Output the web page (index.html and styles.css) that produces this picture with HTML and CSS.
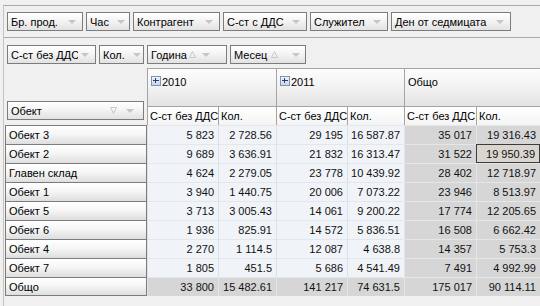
FILE: index.html
```html
<!DOCTYPE html>
<html lang="bg">
<head>
<meta charset="utf-8">
<title>Pivot</title>
<link rel="stylesheet" href="styles.css">
</head>
<body>
<div class="frame">
  <div class="filter-area">
    <div class="fbtn fw-br"><span>Бр. прод.</span><i class="arr"></i></div>
    <div class="fbtn fw-hour"><span>Час</span><i class="arr"></i></div>
    <div class="fbtn fw-ctr"><span>Контрагент</span><i class="arr"></i></div>
    <div class="fbtn fw-vat"><span>С-ст с ДДС</span><i class="arr"></i></div>
    <div class="fbtn fw-emp"><span>Служител</span><i class="arr"></i></div>
    <div class="fbtn fw-day"><span>Ден от седмицата</span><i class="arr"></i></div>
  </div>
  <div class="pivot">
    <div class="data-area">
      <div class="fbtn fw-ssb"><span class="clip">С-ст без ДДС</span><i class="arr"></i></div>
      <div class="fbtn fw-qty"><span>Кол.</span><i class="arr"></i></div>
    </div>
    <div class="col-area">
      <div class="fbtn fw-year"><span>Година</span><svg class="sort" width="7" height="7" viewBox="0 0 7 7"><path d="M3.5 0.5 L6.5 6.5 L0.5 6.5 Z" fill="none" stroke="#c8c8c8" stroke-width="1"/></svg><i class="arr"></i></div>
      <div class="fbtn fw-month"><span>Месец</span><svg class="sort" width="7" height="7" viewBox="0 0 7 7"><path d="M3.5 0.5 L6.5 6.5 L0.5 6.5 Z" fill="none" stroke="#c8c8c8" stroke-width="1"/></svg><i class="arr"></i></div>
    </div>
    <div class="row-area">
      <div class="fbtn fw-obj"><span>Обект</span><svg class="sort" width="7" height="7" viewBox="0 0 7 7"><path d="M0.5 0.5 L6.5 0.5 L3.5 6.5 Z" fill="none" stroke="#c8c8c8" stroke-width="1"/></svg><i class="arr"></i></div>
    </div>
    <div class="chead span2"><i class="plus"></i>2010</div>
    <div class="chead span2"><i class="plus"></i>2011</div>
    <div class="chead span2 last">Общо</div>

    <div class="dhead">С-ст без ДДС</div><div class="dhead">Кол.</div>
    <div class="dhead">С-ст без ДДС</div><div class="dhead">Кол.</div>
    <div class="dhead">С-ст без ДДС</div><div class="dhead last">Кол.</div>

    <div class="rhead">Обект 3</div><div class="c">5 823</div><div class="c">2 728.56</div><div class="c">29 195</div><div class="c">16 587.87</div><div class="c t">35 017</div><div class="c t">19 316.43</div>
    <div class="rhead">Обект 2</div><div class="c">9 689</div><div class="c">3 636.91</div><div class="c">21 832</div><div class="c">16 313.47</div><div class="c t">31 522</div><div class="c t sel">19 950.39</div>
    <div class="rhead">Главен склад</div><div class="c">4 624</div><div class="c">2 279.05</div><div class="c">23 778</div><div class="c">10 439.92</div><div class="c t">28 402</div><div class="c t">12 718.97</div>
    <div class="rhead">Обект 1</div><div class="c">3 940</div><div class="c">1 440.75</div><div class="c">20 006</div><div class="c">7 073.22</div><div class="c t">23 946</div><div class="c t">8 513.97</div>
    <div class="rhead">Обект 5</div><div class="c">3 713</div><div class="c">3 005.43</div><div class="c">14 061</div><div class="c">9 200.22</div><div class="c t">17 774</div><div class="c t">12 205.65</div>
    <div class="rhead">Обект 6</div><div class="c">1 936</div><div class="c">825.91</div><div class="c">14 572</div><div class="c">5 836.51</div><div class="c t">16 508</div><div class="c t">6 662.42</div>
    <div class="rhead">Обект 4</div><div class="c">2 270</div><div class="c">1 114.5</div><div class="c">12 087</div><div class="c">4 638.8</div><div class="c t">14 357</div><div class="c t">5 753.3</div>
    <div class="rhead">Обект 7</div><div class="c">1 805</div><div class="c">451.5</div><div class="c">5 686</div><div class="c">4 541.49</div><div class="c t">7 491</div><div class="c t">4 992.99</div>
    <div class="rhead">Общо</div><div class="c t">33 800</div><div class="c t">15 482.61</div><div class="c t">141 217</div><div class="c t">74 631.5</div><div class="c t">175 017</div><div class="c t">90 114.11</div>
  </div>
</div>
</body>
</html>
```
FILE: styles.css
```css
* { box-sizing: border-box; }
html, body { margin: 0; padding: 0; }
body {
  width: 540px;
  height: 306px;
  overflow: hidden;
  background: #f0f0f0;
  font-family: "Liberation Sans", Arial, sans-serif;
  font-size: 11px;
  color: #000;
}
.frame {
  margin: 5px 0 0 3px;
  border-top: 1px solid #a8a8a8;
  border-left: 1px solid #c4c4c4;
  height: 301px;
}
.filter-area {
  display: flex;
  gap: 3px;
  padding: 6px 0 6px 3px;
  border-bottom: 1px solid #a8a8a8;
}
.fbtn {
  height: 19px;
  display: flex;
  align-items: center;
  padding: 0 6px 0 3px;
  border: 1px solid #7c7c7c;
  background: linear-gradient(#ffffff, #f6f6f6 40%, #e2e2e2);
  white-space: nowrap;
  flex: none;
}
.fbtn span { flex: 1; }
.arr {
  width: 0; height: 0;
  margin-left: 8px;
  border-left: 4px solid transparent;
  border-right: 4px solid transparent;
  border-top: 4px solid #c6c6c6;
}
.sort { flex: none; }
.sort + .arr { margin-left: 6px; }
.clip { overflow: hidden; }
.fw-br { width: 76px; }
.fw-hour { width: 44px; }
.fw-ctr { width: 87px; }
.fw-vat { width: 84px; }
.fw-emp { width: 78px; }
.fw-day { width: 120px; }
.fw-ssb { width: 89px; }
.fw-ssb .arr { margin-left: 3px; }
.fw-qty { width: 45px; }
.fw-year { width: 80px; padding-right: 19px; }
.fw-year span { flex: none; width: 38px; }
.fw-month { width: 76px; padding-right: 8px; }
.fw-month span { flex: none; width: 37px; }
.fw-month .sort + .arr { margin-left: 14px; }
.fw-obj { width: 137px; padding-right: 9px; }
.fw-obj .sort + .arr { margin-left: 9px; }

.pivot {
  display: grid;
  margin-left: 1px;
  grid-template-columns: 142px 71px 58px 71px 57px 72px 1fr;
  grid-template-rows: 30px 38px 19px repeat(9, 19px);
}
.data-area {
  grid-column: 1;
  grid-row: 1;
  display: flex;
  gap: 3px;
  padding: 7px 0 0 2px;
}
.col-area {
  grid-column: 2 / 8;
  grid-row: 1;
  display: flex;
  gap: 3px;
  padding: 7px 0 0 0;
}
.row-area {
  grid-column: 1;
  grid-row: 2 / 4;
  display: flex;
  align-items: flex-end;
  padding: 0 0 5px 2px;
}
.chead {
  border: 1px solid #a4a4a4;
  border-right: none;
  border-bottom: none;
  background: linear-gradient(#fdfdfd, #f2f2f2 50%, #e3e3e3);
  padding: 7px 0 0 3px;
  display: flex;
  align-items: flex-start;
  line-height: 12px;
}
.span2 { grid-column: span 2; }
.plus {
  width: 10px; height: 10px;
  margin: 0 1px 0 0;
  border: 1px solid #7d93ba;
  background: linear-gradient(#eef3fa, #c9d6ea);
  position: relative;
  flex: none;
}
.plus::before, .plus::after {
  content: "";
  position: absolute;
  background: #2c3d66;
}
.plus::before { left: 1px; top: 3px; width: 6px; height: 1px; }
.plus::after { left: 3px; top: 1px; width: 1px; height: 5px; }
.dhead {
  border-top: 1px solid #a4a4a4;
  border-left: 1px solid #a4a4a4;
  background: linear-gradient(#ffffff, #f4f4f4);
  padding: 0 0 0 2px;
  display: flex;
  align-items: center;
  white-space: nowrap;
  overflow: hidden;
}
.rhead {
  border: 1px solid #7c7c7c;
  border-bottom: none;
  background: linear-gradient(#ffffff, #f6f6f6 45%, #dedede);
  padding: 0 0 0 3px;
  display: flex;
  align-items: center;
  white-space: nowrap;
}
.rhead:nth-last-child(7) { border-bottom: 1px solid #7c7c7c; }
.c {
  background: #f0f3f7;
  border-top: 1px solid #e3e6eb;
  border-left: 1px solid #dde0e5;
  display: flex;
  align-items: center;
  justify-content: flex-end;
  padding-right: 4px;
  white-space: nowrap;
  color: #111;
}
.c.t { background: #d6d6d6; border-top-color: #e6e6e6; border-left-color: #e4e4e4; }
.c.sel { border: 1px solid #3c3c3c; background: #dad6cf; }
```
